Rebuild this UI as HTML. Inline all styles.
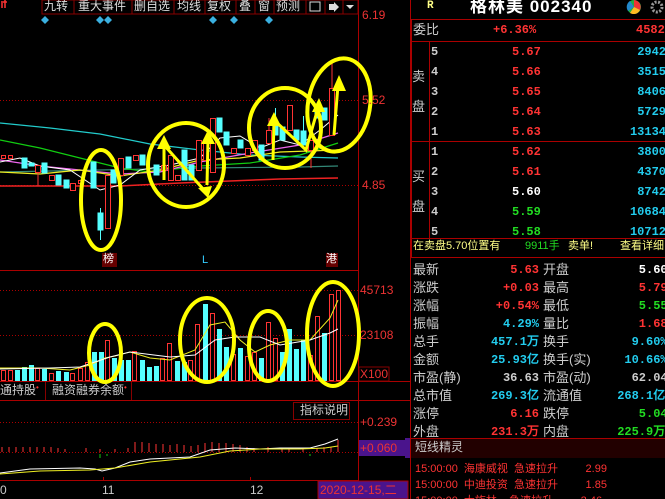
<!DOCTYPE html>
<html><head><meta charset="utf-8"><style>
*{margin:0;padding:0;box-sizing:border-box}
body{width:665px;height:499px;background:#000;overflow:hidden;position:relative;font-family:"Liberation Sans","Noto Sans CJK SC",sans-serif;}
.a{position:absolute;white-space:nowrap;line-height:1}
.cn{font-family:"Liberation Sans","Noto Sans CJK SC",sans-serif}
.m{font-family:"Liberation Mono","DejaVu Sans Mono",monospace;font-weight:bold}
#wrap{position:absolute;left:0;top:0;width:665px;height:499px;overflow:hidden}
</style></head><body><div id="wrap">
<svg class="a" style="left:0;top:0" width="665" height="499">
<line x1="358.5" y1="0" x2="358.5" y2="499" stroke="#a00" />
<line x1="0" y1="270.5" x2="358" y2="270.5" stroke="#a00"/>
<line x1="0" y1="381.5" x2="410" y2="381.5" stroke="#a00"/>
<line x1="0" y1="400.5" x2="410" y2="400.5" stroke="#a00"/>
<line x1="0" y1="480.5" x2="358" y2="480.5" stroke="#a00"/>
<line x1="410.5" y1="0" x2="410.5" y2="499" stroke="#a00"/>
<g stroke="#a00" stroke-dasharray="1 2">
<line x1="0" y1="100.5" x2="358" y2="100.5"/><line x1="0" y1="185.5" x2="358" y2="185.5"/>
<line x1="0" y1="290.5" x2="358" y2="290.5"/><line x1="0" y1="335.5" x2="358" y2="335.5"/>
<line x1="0" y1="422.5" x2="358" y2="422.5"/><line x1="0" y1="452.5" x2="358" y2="452.5"/>
</g>
<rect x="42" y="0" width="316" height="14" fill="#000" stroke="#800"/>
<g stroke="#800"><line x1="74" y1="0" x2="74" y2="14"/><line x1="132" y1="0" x2="132" y2="14"/><line x1="174" y1="0" x2="174" y2="14"/><line x1="205" y1="0" x2="205" y2="14"/><line x1="236" y1="0" x2="236" y2="14"/><line x1="255" y1="0" x2="255" y2="14"/><line x1="274" y1="0" x2="274" y2="14"/><line x1="306" y1="0" x2="306" y2="14"/><line x1="325" y1="0" x2="325" y2="14"/><line x1="343" y1="0" x2="343" y2="14"/></g>
<rect x="310" y="2" width="10" height="9" fill="none" stroke="#ddd"/>
<path d="M329 4h5v-2l5 5-5 5v-2h-5z" fill="#ddd"/>
<path d="M346 5h8l-4 4z" fill="#ddd"/>
<g fill="#3ab0e0"><path d="M45 16l4 4-4 4-4-4z"/><path d="M100 16l4 4-4 4-4-4z"/><path d="M108 16l4 4-4 4-4-4z"/><path d="M213 16l4 4-4 4-4-4z"/><path d="M234 16l4 4-4 4-4-4z"/><path d="M269 16l4 4-4 4-4-4z"/></g>
<path d="M2 3v5M5 0v8M1 2h6" stroke="#f33" stroke-width="1.5"/>
<polyline fill="none" stroke="#2cc" stroke-width="1.2" points="0,123 50,128 100,134 150,144 200,150 250,155 300,157 338,158"/>
<polyline fill="none" stroke="#387" stroke-width="1.2" points="0,172 100,170 200,168 300,167 338,166"/>
<polyline fill="none" stroke="#e22" stroke-width="1.5" points="0,186 120,186 180,183 230,181 280,179 338,178"/>
<polyline fill="none" stroke="#1c1" stroke-width="1.2" points="0,140 40,148 80,158 120,168 150,172 200,166 250,163 300,155 338,143"/>
<polyline fill="none" stroke="#e6e" stroke-width="1.2" points="0,160 40,166 80,170 120,174 160,172 200,162 250,153 300,145 338,133"/>
<polyline fill="none" stroke="#ee2" stroke-width="1.2" points="0,172 40,174 80,170 120,176 160,170 200,160 240,158 280,152 338,150"/>
<polyline fill="none" stroke="#fff" stroke-width="1" points="0,162 20,158 40,166 70,170 100,190 120,185 140,170 170,165 200,158 220,138 240,136 260,148 280,140 300,145 320,130 338,115"/>
<g stroke-width="1">
<g stroke="#f33" fill="#000">
<rect x="1.5" y="155.5" width="4" height="3"/><rect x="8.5" y="155.5" width="4" height="3"/>
<rect x="35.5" y="165.5" width="5" height="7"/><line x1="38" y1="172" x2="38" y2="186"/>
<rect x="49.5" y="175.5" width="5" height="5"/><rect x="70.5" y="183.5" width="5" height="7"/><rect x="78.5" y="180.5" width="5" height="3"/>
<rect x="105.5" y="175.5" width="5" height="53"/>
<rect x="118.5" y="158.5" width="5" height="17"/><rect x="133.5" y="155.5" width="5" height="5"/>
<rect x="161.5" y="165.5" width="5" height="5"/><rect x="168.5" y="155.5" width="5" height="25"/><rect x="175.5" y="175.5" width="5" height="5"/>
<rect x="196.5" y="140.5" width="5" height="30"/><rect x="203.5" y="140.5" width="5" height="20"/><rect x="210.5" y="118.5" width="5" height="54"/>
<rect x="231.5" y="148.5" width="5" height="5"/><rect x="245.5" y="148.5" width="5" height="7"/><rect x="252.5" y="140.5" width="5" height="10"/>
<rect x="266.5" y="130.5" width="5" height="13"/><line x1="269" y1="118" x2="269" y2="130"/>
<rect x="287.5" y="105.5" width="5" height="25"/><rect x="308.5" y="140.5" width="5" height="10"/><line x1="311" y1="150" x2="311" y2="168"/>
<rect x="329.5" y="88.5" width="5" height="47"/><line x1="332" y1="63" x2="332" y2="88"/>
</g>
<g fill="#5ff" stroke="#5ff">
<rect x="22" y="158" width="5" height="10"/><rect x="29" y="163" width="5" height="3"/><rect x="42" y="163" width="5" height="10"/>
<rect x="56" y="175" width="5" height="10"/><rect x="64" y="180" width="5" height="8"/>
<rect x="91" y="162" width="5" height="26"/><rect x="98" y="213" width="5" height="17"/><line x1="100.5" y1="208" x2="100.5" y2="240"/>
<rect x="111" y="170" width="5" height="13"/><rect x="126" y="157" width="5" height="11"/><rect x="140" y="155" width="5" height="10"/>
<rect x="154" y="165" width="5" height="10"/><rect x="182" y="150" width="5" height="30"/><rect x="189" y="165" width="5" height="15"/>
<rect x="217" y="118" width="5" height="14"/><rect x="224" y="132" width="5" height="13"/><rect x="238" y="140" width="5" height="8"/>
<rect x="259" y="145" width="5" height="15"/><rect x="273" y="125" width="5" height="10"/><line x1="275.5" y1="108" x2="275.5" y2="125"/>
<rect x="280" y="127" width="5" height="13"/><rect x="294" y="130" width="5" height="10"/><rect x="301" y="131" width="5" height="14"/><line x1="303.5" y1="116" x2="303.5" y2="131"/>
<rect x="315" y="108" width="5" height="10"/><rect x="322" y="108" width="5" height="12"/>
</g></g>
<g fill="none" stroke="#ff0" stroke-width="4">
<ellipse cx="101" cy="200" rx="20" ry="50"/>
<ellipse cx="186" cy="165" rx="38" ry="42"/>
<ellipse cx="285" cy="128" rx="36" ry="40"/>
<ellipse cx="339" cy="105" rx="31" ry="47" transform="rotate(10 339 105)"/>
<polyline stroke-width="3" points="164,180 164,145 204,190"/>
<polyline stroke-width="3" points="207,185 208,140"/>
<polyline stroke-width="3" points="273,160 274,120 306,150 318,108"/>
<polyline stroke-width="3" points="334,135 338,85"/>
</g>
<g fill="#ff0">
<path d="M164 135l-7 14h14z"/><path d="M208 198l-10-10 14-2z"/><path d="M208 130l-7 14h14z"/>
<path d="M274 112l-7 14h14z"/><path d="M319 98l-7 14h13z"/><path d="M339 75l-7 16h14z"/>
</g>
<g stroke="#f33" fill="#000">
<rect x="1.5" y="370.5" width="4" height="10"/><rect x="8.5" y="370.5" width="4" height="10"/><rect x="35.5" y="368.5" width="4" height="12"/><rect x="49.5" y="373.5" width="4" height="7"/><rect x="70.5" y="373.5" width="4" height="7"/><rect x="78.5" y="368.5" width="4" height="12"/><rect x="85.5" y="362.5" width="4" height="18"/>
<rect x="105.5" y="340.5" width="4" height="40"/><rect x="132.5" y="351.5" width="4" height="29"/><rect x="160.5" y="358.5" width="4" height="22"/><rect x="167.5" y="343.5" width="4" height="37"/><rect x="188.5" y="360.5" width="4" height="20"/><rect x="195.5" y="324.5" width="4" height="56"/><rect x="210.5" y="313.5" width="4" height="67"/><rect x="231.5" y="354.5" width="4" height="26"/><rect x="245.5" y="356.5" width="4" height="24"/><rect x="252.5" y="352.5" width="4" height="28"/><rect x="266.5" y="322.5" width="4" height="58"/><rect x="273.5" y="338.5" width="4" height="42"/><rect x="308.5" y="355.5" width="4" height="25"/><rect x="315.5" y="316.5" width="4" height="64"/><rect x="329.5" y="294.5" width="4" height="86"/><rect x="336.5" y="290.5" width="4" height="90"/>
</g>
<g fill="#5ff">
<rect x="15" y="370" width="5" height="11"/><rect x="22" y="367" width="5" height="14"/><rect x="29" y="365" width="5" height="16"/><rect x="42" y="369" width="5" height="12"/><rect x="56" y="371" width="5" height="10"/><rect x="64" y="372" width="5" height="9"/><rect x="92" y="352" width="5" height="29"/><rect x="99" y="352" width="5" height="29"/><rect x="112" y="358" width="5" height="23"/><rect x="119" y="360" width="5" height="21"/><rect x="126" y="360" width="5" height="21"/><rect x="140" y="360" width="5" height="21"/><rect x="147" y="367" width="5" height="14"/><rect x="154" y="366" width="5" height="15"/><rect x="175" y="361" width="5" height="20"/><rect x="182" y="362" width="5" height="19"/><rect x="203" y="304" width="5" height="77"/><rect x="217" y="329" width="5" height="52"/><rect x="224" y="347" width="5" height="34"/><rect x="238" y="348" width="5" height="33"/><rect x="259" y="358" width="5" height="23"/><rect x="280" y="352" width="5" height="29"/><rect x="287" y="329" width="5" height="52"/><rect x="294" y="349" width="5" height="32"/><rect x="301" y="340" width="5" height="41"/><rect x="322" y="333" width="5" height="48"/>
</g>
<polyline fill="none" stroke="#ee2" points="0,368 40,368 70,370 90,365 105,358 115,356 130,352 150,358 170,360 195,350 210,325 225,322 240,340 255,352 270,345 290,340 310,340 330,318 338,300"/>
<polyline fill="none" stroke="#fff" points="0,369 50,368 80,367 95,362 110,357 130,352 170,357 195,355 215,340 235,337 260,337 280,345 310,340 330,333 338,329"/>
<g fill="none" stroke="#ff0" stroke-width="4">
<ellipse cx="105" cy="353" rx="16" ry="29"/><ellipse cx="207" cy="340" rx="27" ry="42"/><ellipse cx="268" cy="346" rx="19" ry="35"/><ellipse cx="333" cy="334" rx="26" ry="52"/>
</g>
<g stroke="#f33"><path d="M2 452v-5M9 452v-5M16 452v-5M23 452v-5M30 452v-5M37 452v-5M44 452v-5M51 452v-5M58 452v-4M65 452v-3M86 452v-4M100 452v-3M115 452v-3M128 452v-4M135 452v-10M142 452v-10M149 452v-9M156 452v-8M163 452v-8M170 452v-7M177 452v-8M184 452v-7M191 452v-6M198 452v-7M205 452v-9M212 452v-10M219 452v-9M226 452v-9M233 452v-8M240 452v-7M247 452v-5M254 452v-4M268 452v-5M282 452v-4M289 452v-4M303 452v-3M317 452v-4M324 452v-5M331 452v-5M338 452v-12"/></g>
<g stroke="#1c1"><path d="M100 454v4M107 454v2M310 454v2"/></g>
<polyline fill="none" stroke="#fff" points="0,473 30,469 80,468 95,469 102,471 115,468 130,462 150,459 170,458 190,457 210,450 235,448 260,449 280,448 310,448 325,444 338,439"/>
<polyline fill="none" stroke="#ee2" points="0,474 40,471 90,470 115,468 150,462 200,457 230,451 260,449 300,449 325,448 338,446"/>
<rect x="293.5" y="402.5" width="56" height="17" fill="#000" stroke="#800"/>
<line x1="45.5" y1="382" x2="45.5" y2="400" stroke="#800"/><line x1="131.5" y1="382" x2="131.5" y2="400" stroke="#800"/>
<rect x="359" y="440" width="51" height="16" fill="#4a148c"/>
<rect x="318" y="481" width="90" height="18" fill="#4a148c" stroke="#a00"/>
<rect x="359" y="367" width="30" height="14" fill="#000" stroke="#800"/>
<rect x="102" y="253" width="15" height="14" fill="#600"/><rect x="326" y="253" width="12" height="14" fill="#600"/>
<line x1="103.5" y1="477" x2="103.5" y2="481" stroke="#a00"/><line x1="250.5" y1="477" x2="250.5" y2="481" stroke="#a00"/>
<rect x="411.5" y="19.5" width="260" height="238" fill="none" stroke="#a00"/>
<line x1="411" y1="41.5" x2="665" y2="41.5" stroke="#a00"/>
<line x1="411" y1="141.5" x2="665" y2="141.5" stroke="#a00"/>
<line x1="411" y1="238.5" x2="665" y2="238.5" stroke="#a00"/>
<line x1="429.5" y1="42" x2="429.5" y2="238" stroke="#a00"/>
<line x1="411" y1="438.5" x2="665" y2="438.5" stroke="#a00"/>
<rect x="411" y="439" width="254" height="19" fill="#200"/>
<rect x="405" y="438" width="5" height="20" fill="#4a148c"/>
<circle cx="634" cy="7" r="7" fill="#2a4"/><path d="M634 7V0a7 7 0 0 1 6 10z" fill="#e33"/><path d="M634 7l6 3a7 7 0 0 1-10 3z" fill="#fb2"/><path d="M634 7l-6 4a7 7 0 0 1 2-10z" fill="#28c"/>
<circle cx="657" cy="7" r="5" fill="none" stroke="#999" stroke-width="3" stroke-dasharray="2 1.5"/>
</svg>

<div class="a cn" style="left:44px;top:0;font-size:12px;color:#ddd">九转</div>
<div class="a cn" style="left:78px;top:0;font-size:12px;color:#ddd">重大事件</div>
<div class="a cn" style="left:134px;top:0;font-size:12px;color:#ddd">删自选</div>
<div class="a cn" style="left:177px;top:0;font-size:12px;color:#ddd">均线</div>
<div class="a cn" style="left:207px;top:0;font-size:12px;color:#ddd">复权</div>
<div class="a cn" style="left:239px;top:0;font-size:12px;color:#ddd">叠</div>
<div class="a cn" style="left:258px;top:0;font-size:12px;color:#ddd">窗</div>
<div class="a cn" style="left:276px;top:0;font-size:12px;color:#ddd">预测</div>

<div class="a" style="left:362px;top:9px;font-size:12px;color:#e33">6.19</div>
<div class="a" style="left:362px;top:94px;font-size:12px;color:#e33">5.52</div>
<div class="a" style="left:362px;top:179px;font-size:12px;color:#e33">4.85</div>
<div class="a cn" style="left:103px;top:254px;font-size:11px;color:#fff">榜</div>
<div class="a" style="left:202px;top:255px;font-size:11px;color:#3cf">L</div>
<div class="a cn" style="left:326px;top:254px;font-size:11px;color:#fff">港</div>
<div class="a" style="left:360px;top:284px;font-size:12px;color:#e33">45713</div>
<div class="a" style="left:360px;top:329px;font-size:12px;color:#e33">23108</div>
<div class="a" style="left:360px;top:368px;font-size:12px;color:#e33">X100</div>
<div class="a cn" style="left:0;top:384px;font-size:12px;color:#ccc">通持股<span style="color:#f33;font-size:8px;vertical-align:top">•</span></div>
<div class="a cn" style="left:52px;top:384px;font-size:12px;color:#ccc">融资融券余额<span style="color:#f33;font-size:8px;vertical-align:top">•</span></div>
<div class="a cn" style="left:300px;top:404px;font-size:12px;color:#ccc">指标说明</div>
<div class="a" style="left:360px;top:416px;font-size:12px;color:#e33">+0.239</div>
<div class="a" style="left:360px;top:442px;font-size:12px;color:#e33">+0.060</div>
<div class="a" style="left:0;top:484px;font-size:12px;color:#ccc">0</div>
<div class="a" style="left:102px;top:484px;font-size:12px;color:#ccc">11</div>
<div class="a" style="left:250px;top:484px;font-size:12px;color:#ccc">12</div>
<div class="a cn" style="left:320px;top:484px;font-size:12px;color:#e33">2020-12-15,二</div>

<div class="a m" style="left:427px;top:1px;font-size:11px;color:#ff8">R</div>
<div class="a" style="left:470px;top:-2px;font-size:17px;color:#fff;font-weight:bold;letter-spacing:1px;font-family:'Liberation Sans','Noto Sans CJK SC',sans-serif">格林美 002340</div>
<div class="a cn" style="left:413px;top:23px;font-size:13px;color:#ccc">委比</div>
<div class="a m" style="left:493px;top:24px;font-size:12px;color:#f33">+6.36%</div>
<div class="a m" style="left:636px;top:24px;font-size:12px;color:#f33">4582</div>
<div class="a cn" style="left:412px;top:62px;font-size:13px;color:#ccc;line-height:30px;width:14px;white-space:normal">卖 盘</div>
<div class="a cn" style="left:412px;top:162px;font-size:13px;color:#ccc;line-height:30px;width:14px;white-space:normal">买 盘</div>
<div class="a m" style="left:431px;top:42px;font-size:12px;color:#ccc;line-height:20px;white-space:pre">5
4
3
2
1
1
2
3
4
5</div>
<div class="a m" style="left:512px;top:42px;font-size:12px;line-height:20px;white-space:pre;color:#f33">5.67
5.66
5.65
5.64
5.63
5.62
5.61
<span style="color:#fff">5.60</span>
<span style="color:#2d2">5.59</span>
<span style="color:#2d2">5.58</span></div>
<div class="a m" style="left:606px;top:42px;font-size:12px;line-height:20px;white-space:pre;color:#2ce;text-align:right;width:60px">2942
3515
8406
5729
13134
3800
4370
8742
10684
10712</div>
<div class="a cn" style="left:413px;top:241px;font-size:11px;color:#ff8">在卖盘5.70位置有</div>
<div class="a cn" style="left:525px;top:241px;font-size:11px;color:#2d2">9911手</div>
<div class="a cn" style="left:568px;top:241px;font-size:11px;color:#ff8">卖单!</div>
<div class="a cn" style="left:620px;top:241px;font-size:11px;color:#ff8">查看详细</div>

<div class="a cn" style="left:413px;top:261px;font-size:13px;line-height:18px;color:#ccc;white-space:pre">最新
涨跌
涨幅
振幅
总手
金额
市盈(静)
总市值
涨停
外盘</div>
<div class="a m" style="left:440px;top:261px;width:99px;text-align:right;font-size:12px;line-height:18px;white-space:pre;color:#f33">5.63
+0.03
+0.54%
<span style="color:#2ce">4.29%</span>
<span style="color:#2ce">457.1万</span>
<span style="color:#2ce">25.93亿</span>
<span style="color:#ccc">36.63</span>
<span style="color:#2ce">269.3亿</span>
6.16
231.3万</div>
<div class="a cn" style="left:543px;top:261px;font-size:13px;line-height:18px;color:#ccc;white-space:pre">开盘
最高
最低
量比
换手
换手(实)
市盈(动)
流通值
跌停
内盘</div>
<div class="a m" style="left:610px;top:261px;font-size:12px;line-height:18px;white-space:pre;color:#f33"><span style="color:#fff">    5.60</span>
    5.79
<span style="color:#2d2">    5.55</span>
    1.68
<span style="color:#2ce">   9.60%</span>
<span style="color:#2ce">  10.66%</span>
<span style="color:#ccc">   62.04</span>
<span style="color:#2ce"> 268.1亿</span>
<span style="color:#2d2">    5.04</span>
<span style="color:#2d2"> 225.9万</span></div>
<div class="a cn" style="left:415px;top:441px;font-size:12px;color:#ccc">短线精灵</div>
<div class="a cn" style="left:415px;top:461px;font-size:11px;line-height:16px;color:#f33;white-space:pre">15:00:00  海康威视  急速拉升         2.99
15:00:00  中迪投资  急速拉升         1.85
15:00:00  大族林    急速拉升         2.46</div>
</div></body></html>
